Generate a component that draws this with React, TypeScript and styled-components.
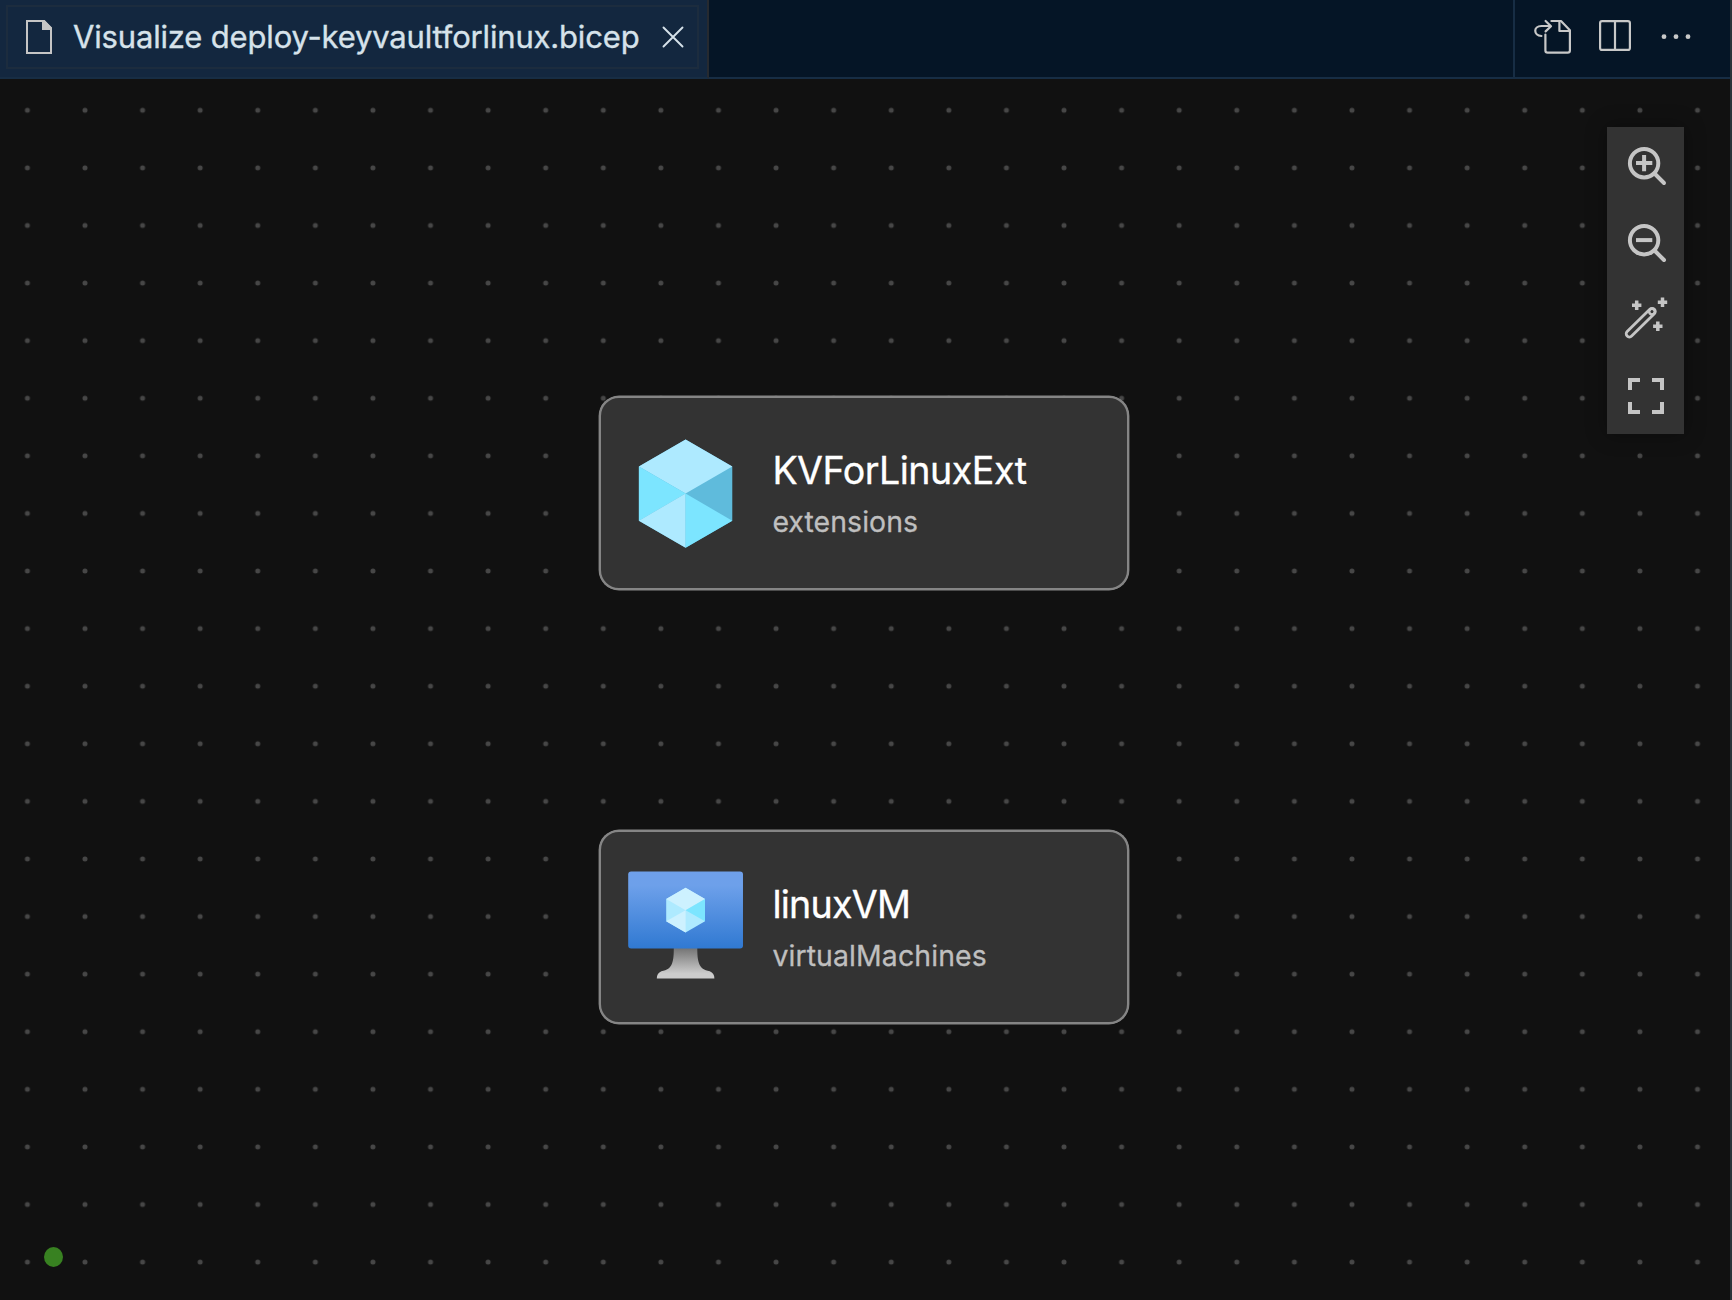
import React from "react";
import styled, { createGlobalStyle } from "styled-components";

const GlobalStyle = createGlobalStyle`
  *, *::before, *::after { box-sizing: border-box; }
  body { margin: 0; background: #111111; overflow: hidden; }
`;

const Editor = styled.div`
  display: flex;
  flex-direction: column;
  width: 1732px;
  height: 1300px;
  border-right: 2px solid #2d3339;
  background: #111111;
  font-family: Inter, "Liberation Sans", sans-serif;
`;

const TabBar = styled.header`
  display: flex;
  flex: none;
  height: 79px;
  border-bottom: 2px solid #172d44;
  background: #051526;
`;

const Tab = styled.div`
  display: flex;
  width: 709px;
  height: 79px;
  padding: 5px 8px 9px 6px;
  border-right: 2px solid #262a30;
  border-bottom: 2px solid #172d44;
  background: #13273f;
`;

const TabFocus = styled.div`
  display: flex;
  align-items: center;
  width: 693px;
  height: 64px;
  padding-left: 18px;
  border: 2px solid #1c2c3e;
`;

const TabTitle = styled.span`
  flex: none;
  width: 610px;
  padding-left: 21px;
  color: #d6e2ea;
  font-size: 31px;
  line-height: 38px;
  letter-spacing: -0.17px;
  white-space: nowrap;
  -webkit-text-stroke: 0.35px currentColor;
`;

const Glyph = styled.svg`
  display: block;
  flex: none;
  overflow: visible;
`;

const Actions = styled.div`
  display: flex;
  align-items: flex-start;
  width: 217px;
  height: 77px;
  margin-left: auto;
  padding: 18px 0 0 19px;
  gap: 24px;
  border-left: 2px solid #172d44;
  color: #c8c8c8;
`;

const Canvas = styled.main`
  position: relative;
  flex: 1;
  overflow: hidden;
`;

const Grid = styled.svg`
  display: block;
  width: 100%;
  height: 100%;
`;

const Node = styled.article<{ $top: number }>`
  position: absolute;
  left: 599px;
  top: ${(p) => p.$top}px;
  display: flex;
  align-items: center;
  width: 529.6px;
  height: 193.8px;
  padding: 2px 0 0 27.2px;
  gap: 29px;
  border: 2px solid #858585;
  border-radius: 20px;
  background: #333333;
  box-shadow: 0 0 0 0.4px #858585;
`;

const NodeText = styled.div`
  display: flex;
  flex-direction: column;
  gap: 9.5px;
  -webkit-text-stroke: 0.3px currentColor;
`;

const NodeName = styled.div<{ $spacing: number }>`
  color: #ffffff;
  font-size: 37.6px;
  line-height: 46px;
  letter-spacing: ${(p) => p.$spacing}px;
`;

const NodeType = styled.div<{ $spacing: number }>`
  color: #bfbfbf;
  font-size: 28.4px;
  line-height: 36px;
  letter-spacing: ${(p) => p.$spacing}px;
`;

const Toolbar = styled.nav`
  position: absolute;
  top: 48px;
  left: 1607px;
  display: flex;
  flex-direction: column;
  width: 77px;
  background: #333333;
  box-shadow: 0 0 19px rgba(0, 0, 0, 0.36);
`;

const ToolButton = styled.button`
  display: block;
  width: 77px;
  height: 76.7px;
  padding: 0;
  border: 0;
  background: transparent;
  color: #c5c5c5;
`;

const Status = styled.div`
  position: absolute;
  left: 44px;
  top: 1168px;
  width: 19px;
  height: 20px;
  border-radius: 50%;
  background: #388121;
`;

const ToolIcon = ({ children }: { children: React.ReactNode }) => (
  <Glyph width="77" height="76.7" viewBox="0 0 77 76.7" fill="none" stroke="currentColor" strokeWidth="4">
    {children}
  </Glyph>
);

const FileIcon = () => (
  <Glyph width="26" height="34" viewBox="0 0 26 34">
    <path d="M1 1H18L25 8V33H1Z" fill="none" stroke="#c5c5c5" strokeWidth="2" />
    <path d="M16 0H18.5L26 8V10H16Z" fill="#c5c5c5" />
  </Glyph>
);

const CloseIcon = () => (
  <Glyph width="22" height="22" viewBox="0 0 22 22">
    <path d="M1.5 1.5 20.5 20.5M20.5 1.5 1.5 20.5" stroke="#d6e2ea" strokeWidth="1.9" strokeLinecap="round" />
  </Glyph>
);

const GoToFileIcon = () => (
  <Glyph width="38" height="38" viewBox="0 0 38 38" fill="none" stroke="currentColor" strokeWidth="2.2" strokeLinejoin="round" strokeLinecap="round">
    <path d="M17.4 3H27L35.9 12.3V32.5Q35.9 34.7 33.7 34.7H13.6Q11.4 34.7 11.4 32.5V16.5" />
    <path d="M25.4 3.5V13H35.5" />
    <path d="M7.4 18C-.8 17.4-.8 8 7.4 8H16.8M11.6 3 17 8.2 11.6 13.4" />
  </Glyph>
);

const SplitIcon = () => (
  <Glyph width="38" height="38" viewBox="0 0 38 38" fill="none" stroke="currentColor" strokeWidth="2.2">
    <rect x="4.1" y="3.1" width="29.8" height="28.8" rx="2" />
    <path d="M19 3V32" />
  </Glyph>
);

const MoreIcon = () => (
  <Glyph width="38" height="38" viewBox="0 0 38 38" fill="currentColor">
    <circle cx="6" cy="18.7" r="2.4" />
    <circle cx="18" cy="18.7" r="2.4" />
    <circle cx="30" cy="18.7" r="2.4" />
  </Glyph>
);

const ZoomIcon = ({ plus }: { plus?: boolean }) => (
  <ToolIcon>
    <circle cx="37.1" cy="36.2" r="14.2" />
    <path d="M47.5 46.5 57 56" strokeWidth="4" strokeLinecap="round" />
    <path d={plus ? "M29 36.1H45.3M37.1 28V44.3" : "M29 36.1H45.3"} />
  </ToolIcon>
);

const WandIcon = () => (
  <ToolIcon>
    <rect x="-3.2" y="-3.2" width="38.2" height="6.4" rx="3.2" transform="translate(22.4 53.8) rotate(-44.5)" strokeWidth="2.8" />
    <circle cx="45" cy="31.6" r="2.9" strokeWidth="2.6" />
    <path d="M25 25.2H34.4M29.7 20.5V29.9M50.8 22.2H60.2M55.5 17.5V26.9M46.1 46.2H55.5M50.8 41.5V50.9" strokeWidth="3.5" />
  </ToolIcon>
);

const FitIcon = () => (
  <ToolIcon>
    <path d="M23 33V23H33M45 23H55V33M55 45V55H45M33 55H23V45" />
  </ToolIcon>
);

const ResourceIcon = () => (
  <Glyph width="115.2" height="115.2" viewBox="0 0 115.2 115.2">
    <path d="M57.6 3.4 104.3 30.5V84.7L57.6 111.8 10.9 84.7V30.5Z" fill="#5fbbdc" />
    <path d="M57.6 3.4 104.3 30.5 57.6 57.6 10.9 30.5Z" fill="#aeeaff" />
    <path d="M10.9 30.5 57.6 57.6 10.9 84.7Z" fill="#7ce5ff" />
    <path d="M10.9 84.7 57.6 57.6V111.8Z" fill="#aeeaff" />
    <path d="M57.6 57.6 104.3 84.7 57.6 111.8Z" fill="#7ce5ff" />
  </Glyph>
);

const MachineIcon = () => (
  <Glyph width="115.2" height="115.2" viewBox="0 0 115.2 115.2">
    <defs>
      <linearGradient id="screen" x1="0" y1="1" x2="0" y2="0">
        <stop offset="0" stopColor="#3079d2" />
        <stop offset=".82" stopColor="#6da0ea" />
        <stop offset="1" stopColor="#6fa0ea" />
      </linearGradient>
      <linearGradient id="stand" x1="0" y1="1" x2="0" y2="0">
        <stop offset=".15" stopColor="#cccccc" />
        <stop offset="1" stopColor="#707070" />
      </linearGradient>
    </defs>
    <path d="M45.8 77H69.3C69.3 91 70.2 99.5 81.8 101.2Q86.4 103 86.4 108.4H28.8Q28.8 103 33.4 101.2C45 99.5 45.8 91 45.8 77Z" fill="url(#stand)" />
    <rect x=".2" y="1.6" width="114.8" height="77" rx="3" fill="url(#screen)" />
    <path d="M57.6 17.8 77 29.1V51.3L57.6 62.6 38.2 51.3V29.1Z" fill="#aeeaff" />
    <path d="M57.6 17.8 77 29.1 57.6 40.2 38.2 29.1Z" fill="#cdf1ff" />
    <path d="M77 29.1V51.3L57.6 40.2Z" fill="#7ce5ff" />
    <path d="M38.2 51.3 57.6 40.2V62.6Z" fill="#cdf1ff" />
  </Glyph>
);

export default function App() {
  return (
    <>
      <GlobalStyle />
      <Editor>
        <TabBar>
          <Tab>
            <TabFocus>
              <FileIcon />
              <TabTitle>Visualize deploy-keyvaultforlinux.bicep</TabTitle>
              <CloseIcon />
            </TabFocus>
          </Tab>
          <Actions>
            <GoToFileIcon />
            <SplitIcon />
            <MoreIcon />
          </Actions>
        </TabBar>
        <Canvas>
          <Grid>
            <defs>
              <pattern id="dots" x="-1.4" y="2.5" width="57.59" height="57.59" patternUnits="userSpaceOnUse">
                <circle cx="28.8" cy="28.8" r="2.5" fill="#474747" />
              </pattern>
            </defs>
            <rect width="100%" height="100%" fill="url(#dots)" />
          </Grid>
          <Node $top={317}>
            <ResourceIcon />
            <NodeText>
              <NodeName $spacing={-0.5}>KVForLinuxExt</NodeName>
              <NodeType $spacing={0.08}>extensions</NodeType>
            </NodeText>
          </Node>
          <Node $top={751.2}>
            <MachineIcon />
            <NodeText>
              <NodeName $spacing={-0.75}>linuxVM</NodeName>
              <NodeType $spacing={0.12}>virtualMachines</NodeType>
            </NodeText>
          </Node>
          <Toolbar>
            <ToolButton aria-label="Zoom in"><ZoomIcon plus /></ToolButton>
            <ToolButton aria-label="Zoom out"><ZoomIcon /></ToolButton>
            <ToolButton aria-label="Layout"><WandIcon /></ToolButton>
            <ToolButton aria-label="Fit to view"><FitIcon /></ToolButton>
          </Toolbar>
          <Status />
        </Canvas>
      </Editor>
    </>
  );
}
